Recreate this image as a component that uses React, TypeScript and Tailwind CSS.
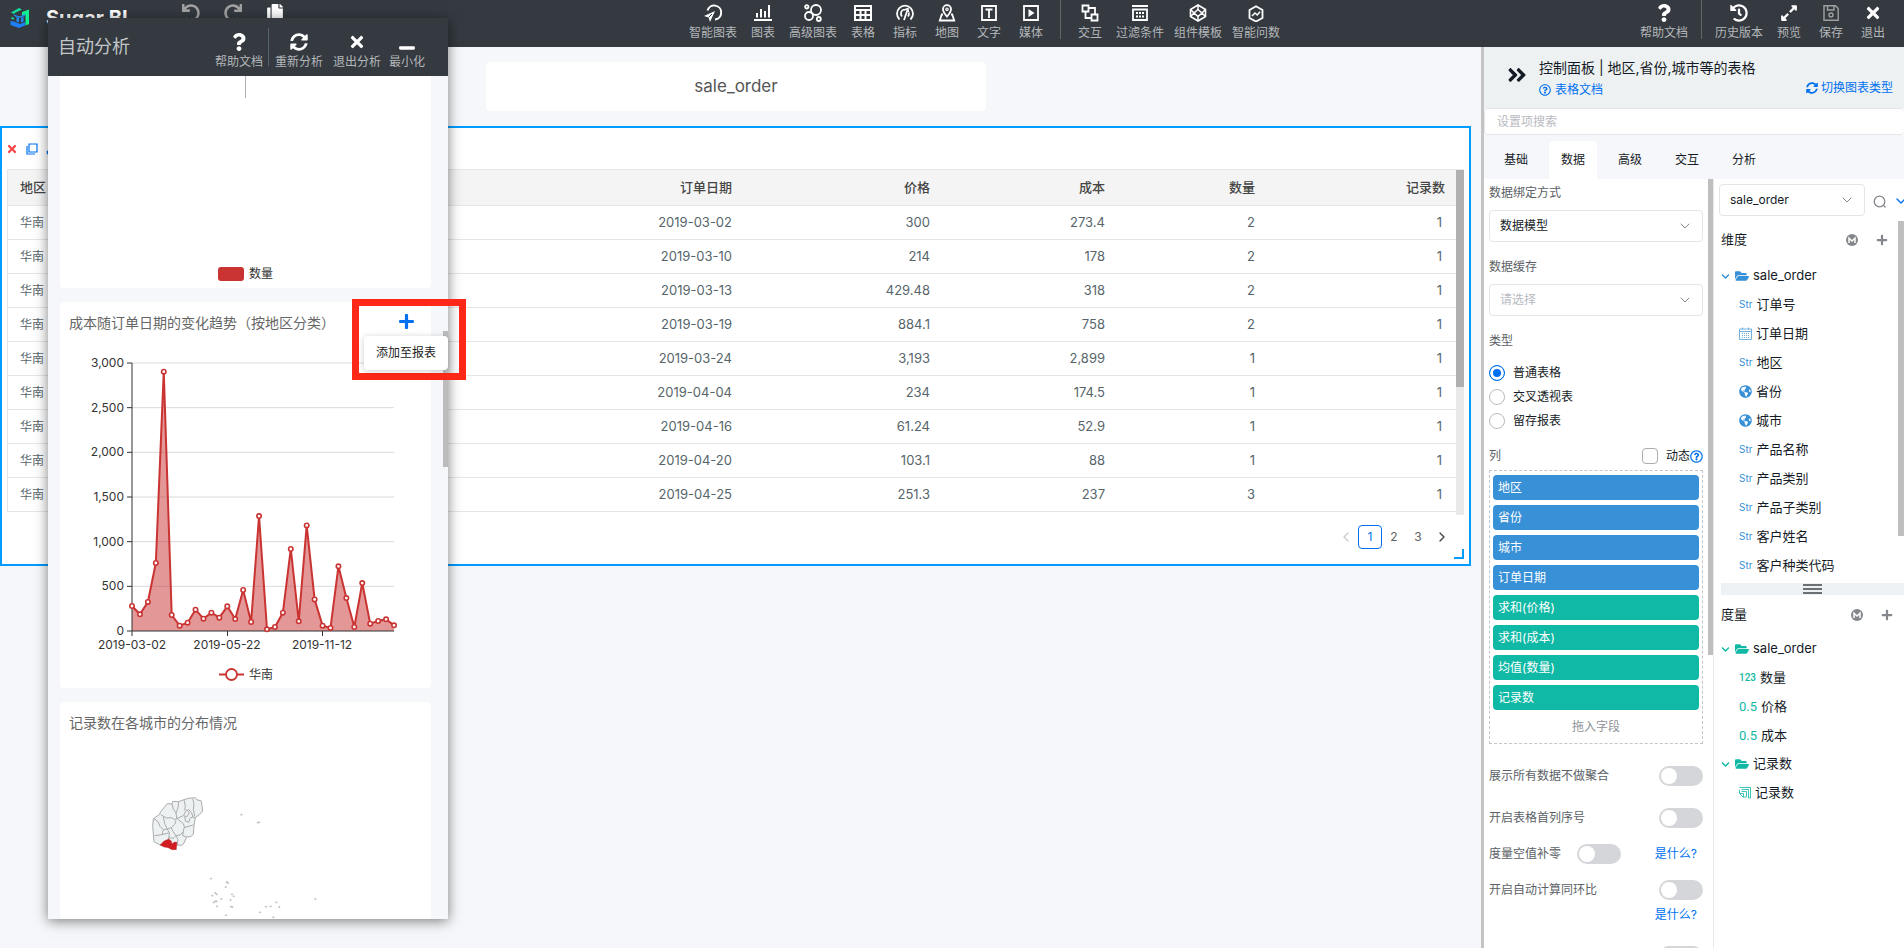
import type { ReactNode } from 'react'
import { ChevronDown, ChevronLeft, ChevronRight } from 'lucide-react'
import {
  FaAngleDoubleRight,
  FaChevronDown,
  FaCopy,
  FaExpandAlt,
  FaFolderOpen,
  FaGlobeAmericas,
  FaHistory,
  FaMinus,
  FaPlus,
  FaQuestion,
  FaRedo,
  FaRegQuestionCircle,
  FaSyncAlt,
  FaTimes,
  FaUndo,
} from 'react-icons/fa'

/* ---------- icons ---------- */

function Glyph({ children }: { children: ReactNode }) {
  return (
    <svg viewBox="0 0 18 18" className="size-[18px]" fill="none" stroke="currentColor" strokeWidth="1.8">
      {children}
    </svg>
  )
}

const SmartChartIcon = () => (
  <Glyph>
    <path d="M3.5 6.5A7 7 0 1 1 11 15.5" strokeWidth="2" />
    <path d="M11 7 0 12l4.5 1.5L6 18z" fill="currentColor" stroke="none" />
    <path d="M4.500 13.500 8 10" strokeWidth="1" stroke="#343a40" />
  </Glyph>
)

const BarsIcon = () => (
  <Glyph>
    <path d="M0 16h18M3 9v4.5M7 5v8.5M11 7v6.5M15 1v12.5" strokeWidth="2" />
  </Glyph>
)

const BubblesIcon = () => (
  <Glyph>
    <circle cx="12" cy="6" r="5" />
    <circle cx="5" cy="12" r="4" />
    <circle cx="2.8" cy="2.8" r="1.7" />
    <circle cx="14.8" cy="15" r="2" />
  </Glyph>
)

const TableIcon = () => (
  <Glyph>
    <path d="M1 2h16v14H1zM1 6h16M1 11h16M6.5 6v10M11.5 6v10" strokeWidth="2" />
  </Glyph>
)

const GaugeIcon = () => (
  <Glyph>
    <path d="M3.5 15.5A8 8 0 1 1 14.5 15.5" />
    <path d="M6 12.5A4.3 4.3 0 0 1 8 5.5M12 12.5a5 5 0 0 0 .8-4M8 16l3.5-10" />
    <path d="M8 6 12 4.5 12.5 8" strokeWidth="1.4" />
  </Glyph>
)

const MapPinIcon = () => (
  <Glyph>
    <path d="M9 12.5C6.500 9.5 5 8 5 5.2a4 4 0 0 1 8 0C13 8 11.5 9.5 9 12.5z" />
    <circle cx="9" cy="5.2" r="1.2" strokeWidth="1.2" />
    <path d="M5 10.5H3.8L1.8 16.5h14.4L14.2 10.5H13" />
  </Glyph>
)

const TextIcon = () => (
  <Glyph>
    <path d="M2 2h14v14H2zM5.5 5.5h7M9 5.5V14" />
  </Glyph>
)

const MediaIcon = () => (
  <Glyph>
    <path d="M2 2h14v14H2z" />
    <path d="M6.5 5v8l6-4z" fill="currentColor" stroke="none" />
  </Glyph>
)

const InteractIcon = () => (
  <Glyph>
    <path d="M1.500 1.500h6v6h-6zM10.500 10.500h6v6h-6zM7.500 4H14v6.500M4.500 7.500V14h6" />
  </Glyph>
)

const FilterIcon = () => (
  <Glyph>
    <path d="M1 2h16" strokeWidth="2" />
    <path d="M2 5.5h14V16H2z" />
    <path d="M5 9h8M5 12.5h8" strokeDasharray="2 1" />
  </Glyph>
)

const WidgetIcon = () => (
  <Glyph>
    <path d="M9 1 16.5 5.5v7L9 17 1.5 12.5v-7z" strokeWidth="1.6" />
    <path
      d="M9 5.5 13 9l-4 3.5L5 9zM9 1v4.5M9 12.5V17M1.5 5.5 5 9 1.5 12.5M16.5 5.5 13 9l3.5 3.5"
      strokeWidth="1.5"
    />
  </Glyph>
)

const AskIcon = () => (
  <Glyph>
    <path d="M9 2.2 15.5 6v8L9 17.5 2.5 14V6z" />
    <path d="m5 12 3-3 2.200 2L13 7.800" strokeWidth="1.5" />
  </Glyph>
)

const SaveIcon = () => (
  <Glyph>
    <path d="M2 1.8h11.500l2.700 2.700v11.700H2zM5.500 2v4h6.500V2" strokeWidth="1.4" />
    <circle cx="9" cy="11" r="2" strokeWidth="1.4" />
  </Glyph>
)

const Logo = () => (
  <svg viewBox="0 0 20 20" className="size-5">
    <path d="M1 4.500 9 0l3 1.500L5.500 4.500 4 6z" fill="#12e0a0" />
    <path d="M12 4 19 1.500v14.500l-3.500 1.500V6.500L12 7.500z" fill="#10f090" />
    <path d="M1.500 9 4 10v1.500l-2.500-.5z" fill="#12e0a0" />
    <path d="M.5 13 4 13.500l6 2.500 5-2v3.500l-6 2.500-8.500-3z" fill="#1f7df5" />
    <path d="M6.500 9 9 10v4.500L6.500 13.500zM11 10l2.500-1v4.500L11 14.500z" fill="#1f8df5" />
    <path d="M4 6.500 9.500 8.500 15 6v2l-5.500 2L4 8z" fill="#1f8df5" />
  </svg>
)

const CalendarIcon = () => (
  <svg viewBox="0 0 13 13" className="size-[13px]" fill="none" stroke="#6fb0e2">
    <path d="M.5 2h12v10.5H.5zM.5 4.5h12M3.5.5v2M9.5.5v2" />
    <path d="M3 6.500h8M3 8.500h8M3 10.500h8" strokeDasharray="1 1" />
  </svg>
)

const RecordIcon = () => (
  <svg viewBox="0 0 12 12" className="size-3" fill="none" stroke="#10b9a5" strokeWidth="0.8">
    <path d="M.5.5h11v10.5H9.500M2.500 2.500h7v8.500M.5 3v3.500L4 10h3.500V4.500H2.500M.5 6.500h4V10" />
  </svg>
)

const ModelIcon = () => (
  <svg viewBox="0 0 12 12" className="size-3">
    <circle cx="6" cy="6" r="6" fill="#84888d" />
    <path d="M3 9V4.2L6 7l3-2.800V9" fill="none" stroke="#fff" strokeWidth="1.5" />
  </svg>
)

const SearchIcon = () => (
  <svg viewBox="0 0 14 14" className="size-[14px]" fill="none" stroke="#84888d" strokeWidth="1.3">
    <circle cx="6.5" cy="6.5" r="5.3" />
    <path d="m10.500 10.500 2 2" />
  </svg>
)

/* ---------- top bar ---------- */

type Tool = { label: string; icon: ReactNode; wide?: boolean; dim?: boolean }

const createTools: Tool[] = [
  { label: '智能图表', icon: <SmartChartIcon />, wide: true },
  { label: '图表', icon: <BarsIcon /> },
  { label: '高级图表', icon: <BubblesIcon />, wide: true },
  { label: '表格', icon: <TableIcon /> },
  { label: '指标', icon: <GaugeIcon /> },
  { label: '地图', icon: <MapPinIcon /> },
  { label: '文字', icon: <TextIcon /> },
  { label: '媒体', icon: <MediaIcon /> },
]

const designTools: Tool[] = [
  { label: '交互', icon: <InteractIcon /> },
  { label: '过滤条件', icon: <FilterIcon />, wide: true },
  { label: '组件模板', icon: <WidgetIcon />, wide: true },
  { label: '智能问数', icon: <AskIcon />, wide: true },
]

const pageTools: Tool[] = [
  { label: '历史版本', icon: <FaHistory className="size-[18px]" />, wide: true },
  { label: '预览', icon: <FaExpandAlt className="size-[18px]" /> },
  { label: '保存', icon: <SaveIcon />, dim: true },
  { label: '退出', icon: <FaTimes className="size-[18px]" /> },
]

function ToolButton({ label, icon, wide, dim }: Tool) {
  return (
    <button className={`flex shrink-0 flex-col items-center ${wide ? 'w-[58px]' : 'w-[42px]'}`}>
      <span className={`flex h-[18px] items-center ${dim ? 'text-[#a0a0a0]' : 'text-white'}`}>{icon}</span>
      <span className="text-xs leading-[22px] whitespace-nowrap text-[#b4b7ba]">{label}</span>
    </button>
  )
}

function TopBar() {
  return (
    <header className="flex h-[47px] shrink-0 items-start justify-between bg-[#343a40] pr-[10px]">
      <div className="flex w-[334px] items-start pt-1">
        <span className="mt-1 ml-[10px]">
          <Logo />
        </span>
        <span className="ml-4 w-[124px] text-xl font-bold text-white">Sugar BI</span>
        <button aria-label="撤销" className="flex w-[42px] justify-center text-[#a3a3a3]">
          <FaUndo className="size-[18px]" />
        </button>
        <button aria-label="重做" className="flex w-[42px] justify-center text-[#a3a3a3]">
          <FaRedo className="size-[18px]" />
        </button>
        <button aria-label="复制" className="flex w-[42px] justify-center text-white">
          <FaCopy className="size-[18px]" />
        </button>
      </div>
      <nav className="flex">
        <div className="flex pt-1">
          {createTools.map((t) => (
            <ToolButton key={t.label} {...t} />
          ))}
        </div>
        <div className="mx-2 h-[39px] w-px bg-[#62676c]" />
        <div className="flex pt-1">
          {designTools.map((t) => (
            <ToolButton key={t.label} {...t} />
          ))}
        </div>
      </nav>
      <nav className="flex">
        <div className="pt-1">
          <ToolButton label="帮助文档" icon={<FaQuestion className="size-[18px]" />} wide />
        </div>
        <div className="mx-2 h-[39px] w-px bg-[#62676c]" />
        <div className="flex pt-1">
          {pageTools.map((t) => (
            <ToolButton key={t.label} {...t} />
          ))}
        </div>
      </nav>
    </header>
  )
}

/* ---------- canvas ---------- */

const orders = [
  ['2019-03-02', '300', '273.4', '2'],
  ['2019-03-10', '214', '178', '2'],
  ['2019-03-13', '429.48', '318', '2'],
  ['2019-03-19', '884.1', '758', '2'],
  ['2019-03-24', '3,193', '2,899', '1'],
  ['2019-04-04', '234', '174.5', '1'],
  ['2019-04-16', '61.24', '52.9', '1'],
  ['2019-04-20', '103.1', '88', '1'],
  ['2019-04-25', '251.3', '237', '3'],
]

function OrderTable() {
  return (
    <section className="mt-[15px] mr-[10px] border-2 border-[#009cff] bg-white">
      <div className="flex h-[41px] items-center gap-2 pl-1">
        <button aria-label="删除" className="text-[#f5484a]">
          <FaTimes className="size-3" />
        </button>
        <button aria-label="复制组件">
          <svg viewBox="0 0 12 12" className="size-3" fill="none" stroke="#0070f0" strokeWidth="1.2">
            <path d="M3 1h8v8H3zM1 3v8h8" />
          </svg>
        </button>
        <button aria-label="移动" className="text-[#0070f0]">
          <FaExpandAlt className="size-3" />
        </button>
      </div>
      <div className="mr-[5px] ml-[5px] flex h-[346px]">
        <table className="w-full table-fixed border-collapse self-start border-l border-[#e4e6e8] text-[13px]">
          <thead>
            <tr className="h-9 border-y border-[#e4e6e8] bg-[#f4f4f4] text-[#444]">
              <th className="pl-3 text-left font-medium">地区</th>
              <th className="w-[198px] pr-3 text-right font-medium">订单日期</th>
              <th className="w-[198px] pr-3 text-right font-medium">价格</th>
              <th className="w-[175px] pr-3 text-right font-medium">成本</th>
              <th className="w-[150px] pr-3 text-right font-medium">数量</th>
              <th className="w-[189px] pr-[11px] text-right font-medium">记录数</th>
            </tr>
          </thead>
          <tbody>
            {orders.map(([date, price, cost, count]) => (
              <tr key={date} className="h-[34px] border-b border-[#e4e6e8] text-[#56656b]">
                <td className="pl-3 text-xs">华南</td>
                <td className="pr-3 text-right">{date}</td>
                <td className="pr-3 text-right">{price}</td>
                <td className="pr-3 text-right">{cost}</td>
                <td className="pr-3 text-right">{count}</td>
                <td className="pr-[14px] text-right">1</td>
              </tr>
            ))}
          </tbody>
        </table>
        <div className="w-2 shrink-0 bg-[#e9e9e9] pt-px">
          <div className="h-[217px] bg-[#b0b0b0]" />
        </div>
      </div>
      <div className="relative flex h-[49px] justify-end pt-[10px] pr-[15px] text-xs text-[#5c6065]">
        <button aria-label="上一页" className="flex size-6 items-center justify-center text-[#ccc]">
          <ChevronLeft className="size-4" />
        </button>
        <button className="size-6 rounded border border-[#0070f0] text-[#0070f0]">1</button>
        <button className="size-6">2</button>
        <button className="size-6">3</button>
        <button aria-label="下一页" className="flex size-6 items-center justify-center text-[#444]">
          <ChevronRight className="size-4" />
        </button>
        <span className="absolute right-[5px] bottom-[5px] size-[10px] border-r-2 border-b-2 border-[#009cff]" />
      </div>
    </section>
  )
}

/* ---------- floating analysis window ---------- */

const costSeries = [
  280, 187, 325, 761, 2903, 179, 60, 93, 239, 138, 205, 149, 276, 134, 459, 101, 1287, 19, 45, 205, 918, 108, 1182,
  354, 60, 34, 724, 369, 45, 537, 82, 112, 131, 63,
]

const AXIS_LEFT = 72
const AXIS_BOTTOM = 289
const STEP = 7.94
const yOf = (v: number) => AXIS_BOTTOM - (v * 268) / 3000

function CostChart() {
  const pts = costSeries.map((v, i) => [AXIS_LEFT + i * STEP, yOf(v)])
  const line = pts.map(([x, y]) => `${x},${y}`).join(' ')
  const right = AXIS_LEFT + 33 * STEP
  return (
    <svg viewBox="0 0 371 346" className="block h-[346px] w-full text-xs" fill="#333">
      {[0, 500, 1000, 1500, 2000, 2500, 3000].map((v) => (
        <g key={v}>
          {v > 0 && <path d={`M${AXIS_LEFT} ${yOf(v)}H${right}`} stroke="#d9dadc" />}
          <path d={`M${AXIS_LEFT - 5} ${yOf(v)}h5`} stroke="#333" />
          <text x={AXIS_LEFT - 8} y={yOf(v) + 4} textAnchor="end">
            {v.toLocaleString('en-US')}
          </text>
        </g>
      ))}
      <polygon points={`${AXIS_LEFT},${AXIS_BOTTOM} ${line} ${right},${AXIS_BOTTOM}`} fill="#c9302f" fillOpacity="0.5" />
      <path d={`M${AXIS_LEFT} 21V${AXIS_BOTTOM}H${right}`} fill="none" stroke="#333" />
      <path d={`M${AXIS_LEFT} ${AXIS_BOTTOM}v5M167.5 ${AXIS_BOTTOM}v5M262.5 ${AXIS_BOTTOM}v5`} stroke="#333" />
      <polyline points={line} fill="none" stroke="#c93433" strokeWidth="2" strokeLinejoin="bevel" />
      {pts.map(([x, y], i) => (
        <circle key={i} cx={x} cy={y} r="2.2" fill="#fff" stroke="#c93433" strokeWidth="1.6" />
      ))}
      <text x="72" y="307" textAnchor="middle">2019-03-02</text>
      <text x="167" y="307" textAnchor="middle">2019-05-22</text>
      <text x="262" y="307" textAnchor="middle">2019-11-12</text>
      <path d="M159 332.5h25" stroke="#c93433" strokeWidth="2" />
      <circle cx="171.5" cy="332.5" r="5.5" fill="#fff" stroke="#c93433" strokeWidth="1.8" />
      <text x="189" y="337">华南</text>
    </svg>
  )
}

const isles = [
  [634, 645], [684, 669], [687, 668], [543, 837], [590, 847], [594, 850], [587, 862], [547, 888], [556, 880],
  [560, 884], [574, 898], [551, 908], [556, 905], [560, 905], [561, 920], [606, 884], [611, 890], [602, 901],
  [603, 921], [607, 922], [588, 947], [708, 921], [722, 920], [739, 908], [748, 922], [690, 938], [730, 953], [856, 898],
]

function CityMap() {
  return (
    <svg viewBox="90 406 1113 551" className="block w-full" stroke="#a9abad" strokeWidth="3" fill="#eef1f2" strokeLinejoin="round">
      <path d="M370 657 388 645 392 636 412 612 426 613 428 605 446 606 462 600 474 596 496 594 500 600 514 604 518 634 508 645 496 654 492 678 490 704 482 711 470 712 462 730 456 737 441 736 412 738 390 736 372 726 370 700 368 680z" />
      <g fill="none">
        <path d="M392 645 410 655 424 654 434 660 444 655M426 613 430 628 438 640 440 655M446 606 444 625 438 640M462 600 466 620 464 632M474 628 484 638 490 654 496 654M488 598 492 612 490 630 494 650" />
        <path d="M372 657 384 666 390 680 400 690 396 705 374 708M400 690 412 688 424 684 434 674 438 662M400 652 404 672 412 688M412 688 418 700 416 720M424 684 428 694 438 708 450 706 460 696 462 684 490 676" />
        <path d="M440 655 450 664 460 672 464 684M444 655 460 648 470 630 478 640 470 652 464 648 466 664 476 668 480 656 490 650M396 705 416 700M416 714 430 716 438 708M438 708 444 720 441 736M460 696 458 708 470 712" />
      </g>
      <path d="M390 736 402 724 416 718 424 724 426 732 434 727 441 728 439 750 426 750 414 744 402 742z" fill="#d01c22" stroke="#b02a2a" strokeWidth="1" />
      {isles.map(([x, y]) => (
        <ellipse key={`${x}-${y}`} cx={x} cy={y} rx="2.5" ry="1.5" strokeWidth="2" />
      ))}
    </svg>
  )
}

function AnalysisWindow() {
  return (
    <aside className="absolute top-[18px] bottom-[29px] left-12 flex w-[400px] flex-col bg-[#f6f7fa] shadow-[0_2px_12px_rgba(0,0,0,0.5)]">
      <div className="flex h-[58px] shrink-0 items-start bg-[#343a40] pr-5 pl-[10px]">
        <h2 className="mt-[17px] flex-1 text-lg leading-6 text-[#c3c6c9]">自动分析</h2>
        <div className="pt-[15px]">
          <ToolButton label="帮助文档" icon={<FaQuestion className="size-[18px]" />} wide />
        </div>
        <div className="mt-[10px] mr-px h-[38px] w-px bg-[#56656b]" />
        <div className="flex pt-[15px]">
          <ToolButton label="重新分析" icon={<FaSyncAlt className="size-[18px]" />} wide />
          <ToolButton label="退出分析" icon={<FaTimes className="size-[18px]" />} wide />
          <ToolButton label="最小化" icon={<FaMinus className="mt-3 size-[18px]" />} />
        </div>
      </div>

      <div className="min-h-0 flex-1 overflow-hidden pr-[17px] pl-3">
        <section className="flex h-[212px] flex-col items-center justify-between rounded-b-sm bg-white pb-[5px]">
          <div className="h-[22px] w-px bg-[#b0b0b0]" />
          <div className="flex items-center gap-[5px] text-xs leading-[18px] text-[#333]">
            <span className="h-[14px] w-[26px] rounded-[3px] bg-[#c93433]" />
            数量
          </div>
        </section>
        <section className="mt-[14px] rounded-sm bg-white">
          <h3 className="h-10 pt-[9px] pl-[9px] text-sm leading-6 text-[#666]">成本随订单日期的变化趋势（按地区分类）</h3>
          <CostChart />
        </section>
        <section className="mt-[14px] rounded-sm bg-white">
          <h3 className="h-[33px] pt-[9px] pl-[9px] text-sm leading-6 text-[#666]">记录数在各城市的分布情况</h3>
          <CityMap />
        </section>
      </div>

      <div className="absolute top-[313px] right-0 h-[136px] w-[5px] bg-[#bcbcbc]" />
      <button aria-label="添加至报表" className="absolute top-[295px] left-[350px] text-[#0070f0]">
        <FaPlus className="size-[17px]" />
      </button>
      <div className="absolute top-[281px] left-[304px] h-[81px] w-[114px] border-[7px] border-[#fe2818]" />
      <div role="tooltip" className="absolute top-[318px] right-0 rounded bg-white px-3 text-xs leading-[34px] text-[#222] shadow-[0_1px_6px_rgba(0,0,0,0.2)]">
        添加至报表
      </div>
    </aside>
  )
}

/* ---------- control panel ---------- */

const tabs = ['基础', '数据', '高级', '交互', '分析']

function SelectField({ id, label, value, muted }: { id: string; label?: string; value: string; muted?: boolean }) {
  return (
    <div className="relative">
      <select
        id={id}
        aria-label={label}
        className={`h-8 w-full appearance-none rounded border border-[#e3e5e8] bg-white pb-px pl-[10px] text-xs ${muted ? 'text-[#b8babf]' : 'text-[#151b26]'}`}
      >
        <option>{value}</option>
      </select>
      <ChevronDown className="pointer-events-none absolute top-2 right-[10px] size-4 text-[#84888d]" strokeWidth={1.5} />
    </div>
  )
}

function Toggle({ label }: { label: string }) {
  return (
    <input
      type="checkbox"
      role="switch"
      aria-label={label}
      className="h-5 w-11 shrink-0 appearance-none rounded-full bg-[#d4d6da] p-0.5 before:block before:size-4 before:rounded-full before:bg-white"
    />
  )
}

const dims = ['地区', '省份', '城市', '订单日期']
const measures = ['求和(价格)', '求和(成本)', '均值(数量)', '记录数']

function SettingsColumn() {
  return (
    <div className="flex w-[230px] shrink-0 border-r border-[#e8e9ed] text-xs text-[#5c5f66]">
      <div className="flex-1 pr-[5px] pl-[5px]">
        <label htmlFor="bind" className="mt-[5px] block leading-[18px]">数据绑定方式</label>
        <div className="mt-2">
          <SelectField id="bind" value="数据模型" />
        </div>
        <label htmlFor="cache" className="mt-4 block leading-[18px]">数据缓存</label>
        <div className="mt-2">
          <SelectField id="cache" value="请选择" muted />
        </div>
        <p className="mt-4 leading-[18px]">类型</p>
        <div className="mt-[11px] text-[#151b26]">
          {['普通表格', '交叉透视表', '留存报表'].map((t, i) => (
            <label key={t} className="flex h-6 items-center gap-2">
              <input
                type="radio"
                name="tableType"
                defaultChecked={i === 0}
                className="size-4 appearance-none rounded-full border border-[#b8babf] checked:border-[#0070f0] checked:bg-[#0070f0] checked:shadow-[inset_0_0_0_3px_white]"
              />
              {t}
            </label>
          ))}
        </div>
        <div className="mt-[14px] flex h-[18px] items-center">
          <span className="flex-1">列</span>
          <label className="flex items-center gap-2 text-[#151b26]">
            <input type="checkbox" className="size-4 appearance-none rounded-sm border border-[#a8abb0]" />
            动态
          </label>
          <FaRegQuestionCircle className="size-[13px] text-[#0070f0]" />
        </div>
        <div className="mt-[5px] border border-dashed border-[#c4c6c9] px-[3px] py-1 text-white">
          {dims.map((d) => (
            <div key={d} className="mb-[5px] h-[25px] rounded-sm bg-[#3890d6] pl-[5px] leading-[25px]">{d}</div>
          ))}
          {measures.map((m) => (
            <div key={m} className="mb-[5px] h-[25px] rounded-sm bg-[#10b9a5] pl-[5px] leading-[25px]">{m}</div>
          ))}
          <p className="text-center leading-6 text-[#8f9297]">拖入字段</p>
        </div>
        <div className="mt-[22px] flex h-5 items-center justify-between">
          展示所有数据不做聚合
          <Toggle label="展示所有数据不做聚合" />
        </div>
        <div className="mt-[22px] flex h-5 items-center justify-between">
          开启表格首列序号
          <Toggle label="开启表格首列序号" />
        </div>
        <div className="mt-4 flex h-5 items-center">
          度量空值补零
          <span className="mx-4 flex flex-1">
            <Toggle label="度量空值补零" />
          </span>
          <a href="#zero" className="pr-[6px] text-[#0070f0]">是什么?</a>
        </div>
        <div className="mt-4 flex h-5 items-center justify-between">
          开启自动计算同环比
          <Toggle label="开启自动计算同环比" />
        </div>
        <p className="mt-[5px] pr-[6px] text-right leading-5">
          <a href="#ratio" className="text-[#0070f0]">是什么?</a>
        </p>
        <div className="mt-[21px] flex justify-end">
          <Toggle label="更多设置" />
        </div>
      </div>
      <div className="w-[5px] shrink-0">
        <div className="h-[476px] bg-[#bfbfbf]" />
      </div>
    </div>
  )
}

function Field({ icon, name }: { icon: ReactNode; name: string }) {
  return (
    <li className="flex h-[29px] items-center gap-1 pl-[18px]">
      {icon}
      {name}
    </li>
  )
}

function Folder({ name, color }: { name: string; color: string }) {
  return (
    <div className="flex h-7 items-center">
      <FaChevronDown className={`size-[9px] ${color}`} />
      <FaFolderOpen className={`ml-[5px] size-[14px] ${color}`} />
      <span className="ml-1">{name}</span>
    </div>
  )
}

const Str = () => <span className="text-[10px] text-[#3890d6]">Str</span>
const Globe = () => <FaGlobeAmericas className="size-[13px] text-[#3890d6]" />
const Decimal = () => <span className="font-['Roboto'] text-[13px] text-[#10b9a5]">0.5</span>

const dimensionFields: [string, ReactNode][] = [
  ['订单号', <Str />],
  ['订单日期', <CalendarIcon />],
  ['地区', <Str />],
  ['省份', <Globe />],
  ['城市', <Globe />],
  ['产品名称', <Str />],
  ['产品类别', <Str />],
  ['产品子类别', <Str />],
  ['客户姓名', <Str />],
  ['客户种类代码', <Str />],
]

function ModelColumn() {
  return (
    <div className="min-w-0 flex-1 overflow-hidden pl-[5px] text-[13px] text-[#151b26]">
      <div className="flex h-[42px] items-start pt-[5px]">
        <div className="w-[146px] shrink-0">
          <SelectField id="model" label="数据模型" value="sale_order" />
        </div>
        <button aria-label="搜索" className="mt-[11px] ml-2 shrink-0">
          <SearchIcon />
        </button>
        <ChevronDown className="mt-[9px] ml-[6px] size-4 shrink-0 text-[#0070f0]" />
      </div>

      <div className="flex">
        <div className="h-[362px] min-w-0 flex-1 overflow-hidden pl-0.5">
          <div className="mb-[3px] flex h-[38px] items-center pr-[10px]">
            <span className="flex-1">维度</span>
            <ModelIcon />
            <button aria-label="新建维度" className="ml-[18px] text-[#84888d]">
              <FaPlus className="size-3" />
            </button>
          </div>
          <Folder name="sale_order" color="text-[#3890d6]" />
          <ul>
            {dimensionFields.map(([name, icon]) => (
              <Field key={name} name={name} icon={icon} />
            ))}
          </ul>
        </div>
        <div className="w-[6px] shrink-0">
          <div className="h-[315px] bg-[#bfbfbf]" />
        </div>
      </div>

      <div className="ml-0.5 flex h-3 flex-col items-center justify-center gap-0.5 bg-[#edf1f3]">
        <span className="h-0.5 w-[19px] bg-[#6c7075]" />
        <span className="h-0.5 w-[19px] bg-[#6c7075]" />
        <span className="h-0.5 w-[19px] bg-[#6c7075]" />
      </div>

      <div className="pl-0.5">
        <div className="flex h-10 items-center pr-[11px]">
          <span className="flex-1">度量</span>
          <ModelIcon />
          <button aria-label="新建度量" className="ml-[18px] text-[#84888d]">
            <FaPlus className="size-3" />
          </button>
        </div>
        <Folder name="sale_order" color="text-[#10b9a5]" />
        <ul>
          <Field name="数量" icon={<span className="font-['Roboto'] text-[10px] font-medium text-[#10b9a5]">123</span>} />
          <Field name="价格" icon={<Decimal />} />
          <Field name="成本" icon={<Decimal />} />
        </ul>
        <Folder name="记录数" color="text-[#10b9a5]" />
        <ul>
          <Field name="记录数" icon={<RecordIcon />} />
        </ul>
      </div>
    </div>
  )
}

function ControlPanel() {
  return (
    <aside className="flex w-[423px] shrink-0 flex-col overflow-hidden border-l-[3px] border-[#c4c4c4] bg-white">
      <div className="flex h-[61px] shrink-0 items-start bg-[#edf1f2] pr-[11px] pl-[22px]">
        <button aria-label="收起" className="mt-[17px] text-[#151b26]">
          <FaAngleDoubleRight className="size-[22px]" />
        </button>
        <div className="ml-[11px] flex-1 pt-[10px]">
          <h2 className="text-sm leading-[22px] whitespace-nowrap text-[#151b26]">控制面板 | 地区,省份,城市等的表格</h2>
          <a href="#doc" className="flex items-center gap-1 text-xs leading-[22px] text-[#0070f0]">
            <FaRegQuestionCircle className="size-3" />
            表格文档
          </a>
        </div>
        <a href="#type" className="mt-8 flex items-center gap-[3px] text-xs leading-[18px] whitespace-nowrap text-[#0070f0]">
          <FaSyncAlt className="size-3" />
          切换图表类型
        </a>
      </div>
      <input
        type="text"
        aria-label="设置项搜索"
        placeholder="设置项搜索"
        className="h-[27px] w-full shrink-0 rounded border border-r-0 border-[#e3e5e8] bg-white px-3 text-xs placeholder:text-[#b8babf]"
      />
      <div className="flex h-11 shrink-0 items-end gap-[9px] bg-[#f6f7fa] pl-2 text-xs text-[#151b26]">
        {tabs.map((t) => (
          <button key={t} className={`h-[38px] w-12 rounded-t ${t === '数据' ? 'bg-white' : ''}`}>
            {t}
          </button>
        ))}
      </div>
      <div className="flex min-h-0 flex-1">
        <SettingsColumn />
        <ModelColumn />
      </div>
    </aside>
  )
}

export default function App() {
  return (
    <div className="relative flex h-screen flex-col overflow-hidden bg-[#f6f7fa] font-['Inter','Noto_Sans_CJK_SC',sans-serif]">
      <TopBar />
      <div className="flex min-h-0 flex-1">
        <main className="min-w-0 flex-1 pt-[15px]">
          <h1 className="mr-[9px] ml-[486px] w-[500px] rounded-sm bg-white text-center text-[17px] leading-[49px] text-[#555]">
            sale_order
          </h1>
          <OrderTable />
        </main>
        <ControlPanel />
      </div>
      <AnalysisWindow />
    </div>
  )
}
